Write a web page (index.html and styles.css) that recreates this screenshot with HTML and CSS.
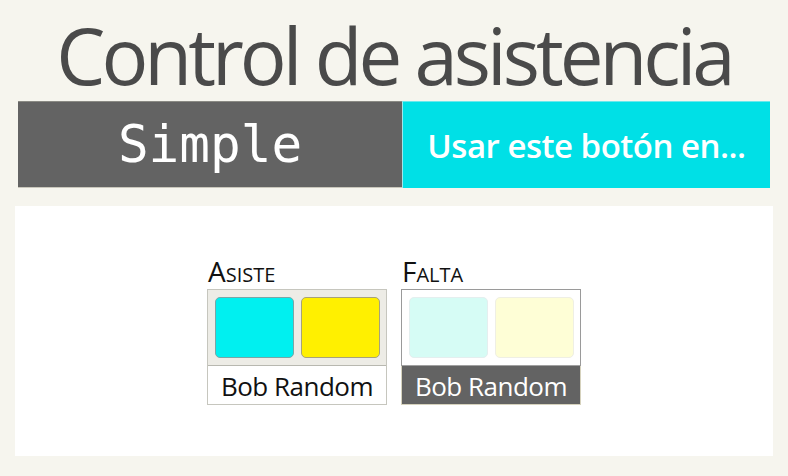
FILE: index.html
```html
<!DOCTYPE html>
<html lang="es">
<head>
<meta charset="utf-8">
<title>Control de asistencia</title>
<link rel="stylesheet" href="styles.css">
</head>
<body>
<h1 class="title">Control de asistencia</h1>
<div class="bar">
  <div class="bar-left">Simple</div>
  <div class="bar-right">Usar este botón en...</div>
</div>
<div class="panel">
  <div class="widget">
    <div class="label">Asiste</div>
    <div class="box box-on">
      <div class="pads">
        <div class="pad pad-cyan"></div>
        <div class="pad pad-yellow"></div>
      </div>
      <div class="name">Bob Random</div>
    </div>
  </div>
  <div class="widget">
    <div class="label">Falta</div>
    <div class="box box-off">
      <div class="pads">
        <div class="pad pad-cyan"></div>
        <div class="pad pad-yellow"></div>
      </div>
      <div class="name">Bob Random</div>
    </div>
  </div>
</div>
</body>
</html>
```
FILE: styles.css
```css
* { box-sizing: border-box; }
html, body { margin: 0; padding: 0; }
body {
  background: #f6f5ee;
  font-family: "Open Sans", "Noto Sans", sans-serif;
  width: 788px;
  height: 476px;
  overflow: hidden;
}
.title {
  margin: 0;
  padding-top: 15px;
  height: 101px;
  text-align: center;
  font-weight: 400;
  font-size: 78px;
  line-height: 80px;
  color: #4a4a4a;
  letter-spacing: -4px;
  white-space: nowrap;
}
.bar {
  display: flex;
  margin: 0 18px;
  height: 87px;
}
.bar-left {
  width: 384px;
  background: #636363;
  border-top: 1px solid #8a8a84;
  border-bottom: 1px solid #c9c7bc;
  color: #fff;
  font-family: "DejaVu Sans Mono", monospace;
  font-size: 51px;
  display: flex;
  align-items: center;
  justify-content: center;
}
.bar-right {
  flex: 1;
  background: #00e0e6;
  border-top: 1px solid #6ae8ec;
  border-left: 1px solid #9ee7ea;
  color: #fff;
  font-weight: 600;
  font-size: 33px;
  display: flex;
  align-items: center;
  justify-content: center;
  letter-spacing: -0.5px;
}
.panel {
  margin: 18px 15px 0;
  height: 250px;
  background: #fff;
  display: flex;
  justify-content: center;
  gap: 14px;
  padding-top: 47px;
}
.widget { width: 180px; }
.label {
  font-variant: small-caps;
  font-size: 28px;
  line-height: 36px;
  height: 36px;
  color: #111;
  padding-left: 1px;
}
.box {
  width: 180px;
  height: 116px;
  border: 1px solid #c6c6be;
  display: flex;
  flex-direction: column;
}
.pads {
  display: flex;
  gap: 7px;
  padding: 7px 6px 7px 7px;
  height: 77px;
  border-bottom: 1px solid #b8b8b0;
}
.pad {
  flex: 1;
  border-radius: 5px;
}
.box-on .pads { background: #edece6; }
.box-on .pad-cyan { background: #00f0f0; border: 1px solid #7aa6a6; }
.box-on .pad-yellow { background: #fff000; border: 1px solid #a7a27a; }
.box-off { border-color: #9a9a9a; }
.box-off .pads { background: #fff; border-bottom-color: #a0a0a0; }
.box-off .pad-cyan { background: #d6fcf5; border: 1px solid #e4efef; }
.box-off .pad-yellow { background: #fefed6; border: 1px solid #efefe4; }
.name {
  flex: 1;
  display: flex;
  align-items: center;
  justify-content: center;
  font-size: 26px;
  letter-spacing: -0.5px;
  padding-top: 2px;
}
.box-on .name { background: #fff; color: #111; }
.box-off .name {
  background: #636363;
  color: #fff;
  border: 1px solid #d6d2bd;
  border-top: none;
  margin: 0 -1px -1px;
}
```
